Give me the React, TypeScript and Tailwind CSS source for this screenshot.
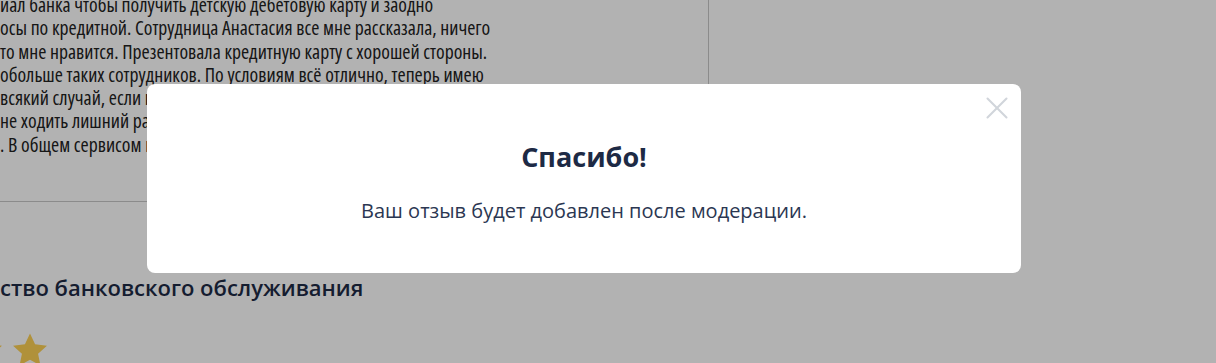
import { X } from "lucide-react"

const reviewLines = [
  "иал банка чтобы получить детскую дебетовую карту и заодно",
  "осы по кредитной. Сотрудница Анастасия все мне рассказала, ничего",
  "то мне нравится. Презентовала кредитную карту с хорошей стороны.",
  "обольше таких сотрудников. По условиям всё отлично, теперь имею",
  "всякий случай, если понадобится быстро оплатить покупку и",
  "не ходить лишний раз в отделение за наличными деньгами.",
  ". В общем сервисом и обслуживанием я осталась довольна.",
]

function Star() {
  return (
    <svg viewBox="0 0 24 24" className="w-[38px] h-[38px] shrink-0" fill="#fdd053">
      <path d="M12 1.5l3.2 6.9 7.5.9-5.6 5.1 1.5 7.4L12 18.1l-6.6 3.7 1.5-7.4L1.3 9.3l7.5-.9z" />
    </svg>
  )
}

export default function App() {
  return (
    <div className="relative w-[1216px] h-[363px] overflow-hidden bg-white font-['Open_Sans',sans-serif]">
      {/* page behind the modal */}
      <div className="flex">
        <div className="w-[709px] border-r border-[#c8c8c8] h-[201px] flex flex-col">
          <div className="mt-[-7px] text-[19.7px] leading-[23.3px] text-[#222] font-stretch-condensed">
            {reviewLines.map((line) => (
              <div key={line} className="whitespace-nowrap">{line}</div>
            ))}
          </div>
        </div>
      </div>
      <div className="w-[709px] border-t border-[#c8c8c8]" />
      <h3 className="mt-[70px] text-[22px] leading-[30px] font-semibold text-[#1d2a45] whitespace-nowrap">
        ство банковского обслуживания
      </h3>
      <div className="mt-[29px] flex gap-[7px] ml-[-34px]">
        <Star />
        <Star />
      </div>

      {/* overlay */}
      <div className="absolute inset-0 bg-black/30" />

      {/* modal */}
      <div className="absolute left-[147px] top-[84px] w-[874px] h-[189px] bg-white rounded-lg flex flex-col items-center">
        <button className="absolute right-[5px] top-[5px] text-[#d1d5db]">
          <X size={38} strokeWidth={1.3} />
        </button>
        <h2 className="mt-[55px] text-[27px] leading-[36px] font-bold text-[#1d2a45]">Спасибо!</h2>
        <p className="mt-[22px] text-[20px] leading-[28px] text-[#2b3752]">
          Ваш отзыв будет добавлен после модерации.
        </p>
      </div>
    </div>
  )
}
